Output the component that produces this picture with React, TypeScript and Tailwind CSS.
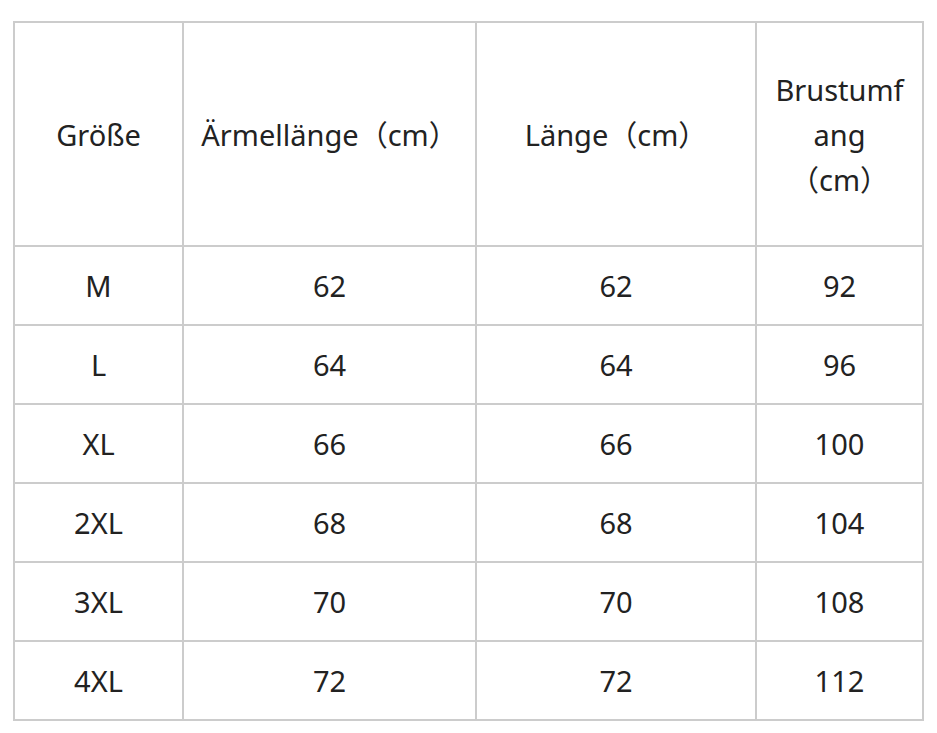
import React from "react";

const rows = [
  ["M", "62", "62", "92"],
  ["L", "64", "64", "96"],
  ["XL", "66", "66", "100"],
  ["2XL", "68", "68", "104"],
  ["3XL", "70", "70", "108"],
  ["4XL", "72", "72", "112"],
];

const headers = ["Größe", "Ärmellänge（cm）", "Länge（cm）", "Brustumfang（cm）"];

export default function App() {
  return (
    <div className="min-h-[733px] w-[937px] bg-white pl-[13px] pt-[21px]">
      <table className="w-[911px] table-fixed border-collapse text-center font-['Noto_Sans','Noto_Sans_CJK_JP',sans-serif] text-[29px] leading-[45px] text-[#222] [text-spacing-trim:space-all]">
        <colgroup>
          <col className="w-[169px]" />
          <col className="w-[293px]" />
          <col className="w-[280px]" />
          <col className="w-[167px]" />
        </colgroup>
        <thead>
          <tr className="h-[224px]">
            {headers.map((h) => (
              <th
                key={h}
                className="border-2 border-[#cccccc] px-[14px] align-middle font-normal [overflow-wrap:anywhere]"
              >
                {h}
              </th>
            ))}
          </tr>
        </thead>
        <tbody>
          {rows.map((r) => (
            <tr key={r[0]} className="h-[79px]">
              {r.map((c, i) => (
                <td key={i} className="border-2 border-[#cccccc] px-[14px] align-middle">
                  {c}
                </td>
              ))}
            </tr>
          ))}
        </tbody>
      </table>
    </div>
  );
}
